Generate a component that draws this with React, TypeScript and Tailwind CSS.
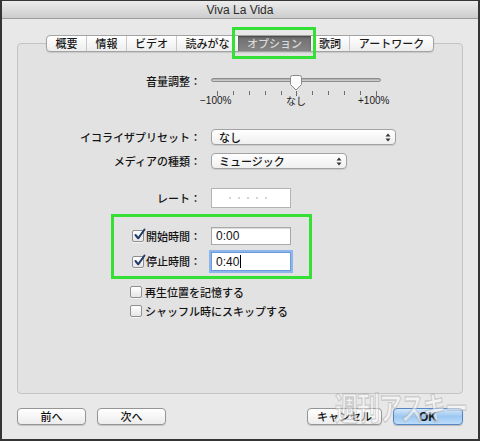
import React from "react";

const JP = "font-['Noto_Sans_CJK_JP','Noto_Sans',sans-serif]";

function Arrows() {
  return (
    <svg width="6" height="9" viewBox="0 0 6 9">
      <path d="M3 0.5 L5.5 3.5 L0.5 3.5 Z" fill="#333" />
      <path d="M3 8.5 L5.5 5.5 L0.5 5.5 Z" fill="#333" />
    </svg>
  );
}

function Check({ checked }: { checked?: boolean }) {
  return (
    <div className="relative w-[12px] h-[12px] rounded-[2px] border border-[#8f8f8f] bg-gradient-to-b from-white to-[#e6e6e6] shadow-[0_1px_0_rgba(255,255,255,0.6)]">
      {checked && (
        <svg className="absolute left-[0px] top-[-3px]" width="13" height="13" viewBox="0 0 13 13">
          <path d="M2.5 7 L5.2 10.3 L11.5 1.5" fill="none" stroke="#203a6a" strokeWidth="2" strokeLinecap="round" strokeLinejoin="round" />
        </svg>
      )}
    </div>
  );
}

const tabs: { label: string; w: number; sel?: boolean }[] = [
  { label: "概要", w: 39 },
  { label: "情報", w: 40 },
  { label: "ビデオ", w: 50 },
  { label: "読みがな", w: 62 },
  { label: "オプション", w: 73, sel: true },
  { label: "歌詞", w: 38 },
  { label: "アートワーク", w: 84 },
];

const LBL = "text-[11px] leading-none text-[#141414] font-medium";

export default function App() {
  const ticks = Array.from({ length: 11 }, (_, i) => i);
  return (
    <div className={`relative w-[480px] h-[441px] ${JP}`}>
      <div className="w-full h-full flex flex-col bg-[#e8e8e8] border-x-2 border-t border-b-2 border-[#353535]">
        {/* title bar */}
        <div className="h-[18px] shrink-0 flex items-center justify-center bg-gradient-to-b from-[#ececec] to-[#cdcdcd] border-b border-[#9c9c9c]">
          <span className="font-['Liberation_Sans',sans-serif] text-[12px] leading-none text-[#2c2c2c]">Viva La Vida</span>
        </div>

        <div className="px-[15px]">
          {/* group box */}
          <div className="mt-[24px] h-[351px] rounded-[4px] border border-[#c4c4c4] bg-[#e2e2e2] flex flex-col">
            {/* tabs */}
            <div className="-mt-[9px] flex justify-center">
              <div className="flex h-[17px] rounded-[4px] border border-[#a3a3a3] bg-gradient-to-b from-white to-[#ededed] overflow-hidden shadow-[0_1px_1px_rgba(0,0,0,0.12)]">
                {tabs.map((t, i) => (
                  <div
                    key={t.label}
                    style={{ width: t.w }}
                    className={`flex items-center justify-center text-[11px] font-medium leading-none ${
                      t.sel
                        ? "bg-gradient-to-b from-[#6e6e6e] to-[#858585] text-[#d9d9d9] shadow-[inset_0_1px_2px_rgba(0,0,0,0.4)]"
                        : "text-[#1a1a1a]"
                    } ${i > 0 && !t.sel && !tabs[i - 1].sel ? "border-l border-[#c8c8c8]" : ""}`}
                  >
                    {t.label}
                  </div>
                ))}
              </div>
            </div>

            {/* slider row */}
            <div className="mt-[20px] flex h-[18px] items-center">
              <div className={`w-[183px] text-right ${LBL}`}>音量調整：</div>
              <div className="ml-[10px] relative w-[170px] h-[18px]">
                <div className="absolute left-0 right-0 top-[6px] h-[4px] rounded-full border border-[#8d8d8d] bg-gradient-to-b from-[#a9a9a9] to-[#d6d6d6]" />
                <svg className="absolute left-[78px] top-[3px]" width="14" height="16" viewBox="0 0 14 16">
                  <path d="M1.5 2.5 Q1.5 0.5 3.5 0.5 L10.5 0.5 Q12.5 0.5 12.5 2.5 L12.5 9.5 L7 15 L1.5 9.5 Z" fill="#fbfbfb" stroke="#8a8a8a" />
                </svg>
              </div>
            </div>
            <div className="flex">
              <div className="w-[193px]" />
              <div className="w-[170px]">
                <div className="mt-[1px] h-[5px] pl-[6px] pr-[4px] flex justify-between items-start">
                  {ticks.map((i) => (
                    <div key={i} className={`w-px bg-[#6c6c6c] ${i % 5 === 0 ? "h-[5px]" : "h-[4px]"}`} />
                  ))}
                </div>
                <div className="relative h-[10px] text-[10px] leading-[10px] text-[#1a1a1a]">
                  <span className="absolute left-[-11px] top-0 font-['Liberation_Sans',sans-serif]">−100%</span>
                  <span className="absolute left-[75px] top-0">なし</span>
                  <span className="absolute left-[147px] top-0 font-['Liberation_Sans',sans-serif]">+100%</span>
                </div>
              </div>
            </div>

            {/* EQ */}
            <div className="mt-[23px] flex h-[16px] items-center">
              <div className={`w-[183px] text-right ${LBL}`}>イコライザプリセット：</div>
              <div className="ml-[10px] w-[185px] h-[16px] rounded-[4px] border border-[#a2a2a2] bg-gradient-to-b from-white to-[#efefef] shadow-[0_1px_1px_rgba(0,0,0,0.1)] flex items-center justify-between pl-[7px] pr-[4px]">
                <span className={LBL}>なし</span>
                <Arrows />
              </div>
            </div>

            {/* media */}
            <div className="mt-[8px] flex h-[16px] items-center">
              <div className={`w-[183px] text-right ${LBL}`}>メディアの種類：</div>
              <div className="ml-[10px] w-[136px] h-[16px] rounded-[4px] border border-[#a2a2a2] bg-gradient-to-b from-white to-[#efefef] shadow-[0_1px_1px_rgba(0,0,0,0.1)] flex items-center justify-between pl-[7px] pr-[4px]">
                <span className={LBL}>ミュージック</span>
                <Arrows />
              </div>
            </div>

            {/* rate */}
            <div className="mt-[19px] flex h-[20px] items-center">
              <div className={`w-[183px] text-right ${LBL}`}>レート：</div>
              <div className="ml-[10px] w-[80px] h-[20px] border border-[#b3b3b3] bg-white flex items-center gap-[7px] pl-[17px]">
                {[0, 1, 2, 3, 4].map((i) => (
                  <div key={i} className="w-[2px] h-[2px] rounded-full bg-[#c4c4c4]" />
                ))}
              </div>
            </div>

            {/* start */}
            <div className="mt-[19px] flex h-[18px] items-center">
              <div className="w-[183px] flex justify-end items-center">
                <Check checked />
                <span className={`ml-[2px] ${LBL}`}>開始時間：</span>
              </div>
              <div className="ml-[10px] w-[80px] h-[18px] border border-[#a9a9a9] bg-white shadow-[inset_0_1px_1px_rgba(0,0,0,0.15)] flex items-center pl-[4px]">
                <span className="font-['Liberation_Sans',sans-serif] text-[12px] leading-none text-[#111]">0:00</span>
              </div>
            </div>

            {/* stop */}
            <div className="mt-[7px] flex h-[19px] items-center">
              <div className="w-[183px] flex justify-end items-center">
                <Check checked />
                <span className={`ml-[2px] ${LBL}`}>停止時間：</span>
              </div>
              <div className="ml-[10px] w-[80px] h-[19px] border border-[#6d9bd8] bg-white ring-2 ring-[#8db7ec] flex items-center pl-[4px]">
                <span className="font-['Liberation_Sans',sans-serif] text-[12px] leading-none text-[#111]">0:40</span>
                <div className="ml-[1px] w-px h-[13px] bg-black" />
              </div>
            </div>

            {/* remember */}
            <div className="mt-[14px] flex h-[14px] items-center pl-[112px]">
              <Check />
              <span className={`ml-[3px] ${LBL}`}>再生位置を記憶する</span>
            </div>
            <div className="mt-[5px] flex h-[14px] items-center pl-[112px]">
              <Check />
              <span className={`ml-[3px] ${LBL}`}>シャッフル時にスキップする</span>
            </div>
          </div>

          {/* buttons */}
          <div className="mt-[14px] flex items-center">
            <div className={`w-[69px] h-[17px] rounded-[4px] border border-[#959595] bg-gradient-to-b from-white to-[#ececec] shadow-[0_1px_1px_rgba(0,0,0,0.15)] flex items-center justify-center ${LBL}`}>前へ</div>
            <div className={`ml-[11px] w-[69px] h-[17px] rounded-[4px] border border-[#959595] bg-gradient-to-b from-white to-[#ececec] shadow-[0_1px_1px_rgba(0,0,0,0.15)] flex items-center justify-center ${LBL}`}>次へ</div>
            <div className="flex-1" />
            <div className={`w-[75px] h-[17px] rounded-[4px] border border-[#959595] bg-gradient-to-b from-white to-[#ececec] shadow-[0_1px_1px_rgba(0,0,0,0.15)] flex items-center justify-center ${LBL}`}>キャンセル</div>
            <div className="ml-[11px] w-[70px] h-[17px] rounded-[4px] border border-[#5785c4] bg-gradient-to-b from-[#d3e7fa] via-[#9cc8f2] to-[#bcdcfa] shadow-[0_1px_1px_rgba(0,0,0,0.2)] flex items-center justify-center font-['Liberation_Sans',sans-serif] text-[12px] font-bold leading-none text-[#1a1a1a]">OK</div>
          </div>
        </div>
      </div>

      {/* highlights */}
      <div className="absolute left-[232px] top-[27px] w-[84px] h-[32px] border-[3px] border-[#33e033]" />
      <div className="absolute left-[111px] top-[214px] w-[201px] h-[65px] border-[3px] border-[#33e033]" />

      {/* watermark */}
      <div className="absolute left-[335px] top-[391px] text-[23px] font-bold leading-none tracking-[-1px] text-[rgba(255,255,255,0.5)] [-webkit-text-stroke:1px_rgba(150,150,150,0.4)] scale-y-[1.4] origin-top pointer-events-none">
        週刊アスキー
      </div>
    </div>
  );
}
